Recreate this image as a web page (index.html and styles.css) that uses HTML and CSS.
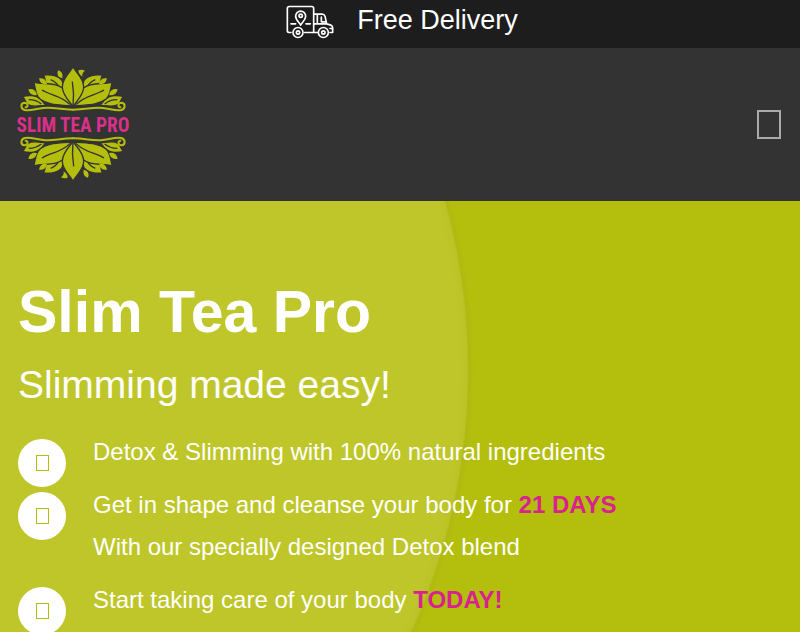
FILE: index.html
```
<!DOCTYPE html>
<html lang="en">
<head>
<meta charset="utf-8">
<meta name="viewport" content="width=device-width, initial-scale=1">
<title>Slim Tea Pro</title>
<link rel="stylesheet" href="styles.css">
</head>
<body>
<div class="topbar">
  <svg class="truck" viewBox="45 15 150 105" aria-hidden="true">
    <path d="M63 99H57Q52 99 52 94V27Q52 21 58 21H125Q131 21 131 27V99H104M63 73H77M108 73H121M131 44H156Q163 44 165 50L170 73L183 77Q188 79 188 85V99H180M142 99H131M131 73H170M142 44V73M154 53V67H166M186 87H180"/>
    <path d="M92 77C87 68 77 61 77 50A15 15 0 0 1 107 50C107 61 97 68 92 77Z"/>
    <circle cx="92" cy="49" r="5"/>
    <circle cx="84" cy="99" r="15"/><circle cx="84" cy="99" r="5"/>
    <circle cx="160" cy="99" r="15"/><circle cx="160" cy="99" r="5"/>
  </svg>
  <span>Free Delivery</span>
</div>
<header class="header">
  <a class="logo" href="#" aria-label="Slim Tea Pro">
    <svg viewBox="48 36 342 342">
      <defs>
        <g id="side">
          <path class="leaf" d="M130 60C152 57 177 62 187 78C192 90 188 99 187 108C168 103 148 101 140 89C133 80 138 71 130 60Z"/>
          <path class="vein" d="M152 74Q172 82 180 103"/>
          <path class="leaf" d="M67 125C86 119 108 121 120 131C128 137 130 143 137 151C117 152 96 157 84 149C75 143 77 132 67 125Z"/>
          <path class="vein" d="M86 134Q108 134 124 147"/>
          <path class="leaf" d="M101 81C130 89 164 81 186 98C205 113 210 132 215 153C184 149 146 152 121 133C104 119 108 99 101 81Z"/>
          <path class="vein" d="M126 105C152 122 184 121 210 149"/>
          <path d="M85 103Q105 98 111 120Q90 124 85 103Z"/>
          <path d="M117 70Q137 67 141 87Q121 91 117 70Z"/>
          <path class="curl" d="M219 164C178 164 162 156 130 159C107 161 91 169 74 165C61 161 61 144 73 143C84 143 86 156 77 157"/>
        </g>
        <g id="crown">
          <use href="#side"/>
          <use href="#side" transform="translate(438 0) scale(-1 1)"/>
          <path class="leaf" d="M219 36C230 55 252 71 251 97C250 121 231 138 219 154C207 138 188 121 187 97C186 71 208 55 219 36Z"/>
          <path class="vein" d="M217 80Q223 116 219 152"/>
          <path d="M174 46Q191 50 187 70Q167 66 174 46Z"/>
          <path d="M235 46Q246 42 255 47Q245 54 247 65Q235 57 235 46Z"/>
        </g>
      </defs>
      <use href="#crown"/>
      <use href="#crown" transform="rotate(180 219 207)"/>
      <text class="brand" x="219" y="230">SLIM TEA PRO</text>
    </svg>
  </a>
  <button class="menu" type="button" aria-label="Menu"></button>
</header>
<main class="hero">
  <h1>Slim Tea Pro</h1>
  <h2>Slimming made easy!</h2>
  <ul class="benefits">
    <li><span class="badge"></span><p>Detox &amp; Slimming with 100% natural ingredients</p></li>
    <li><span class="badge"></span><p>Get in shape and cleanse your body for <strong>21 DAYS</strong><br>With our specially designed Detox blend</p></li>
    <li><span class="badge"></span><p>Start taking care of your body <strong>TODAY!</strong></p></li>
  </ul>
</main>
</body>
</html>
```
FILE: styles.css
```
* { box-sizing: border-box; }
html { height: 100%; }
body {
  margin: 0;
  height: 100%;
  overflow: hidden;
  display: flex;
  flex-direction: column;
  font-family: "Liberation Sans", Arial, sans-serif;
  color: #fff;
  background: #b4be0d;
}
.topbar {
  flex: none;
  display: flex;
  justify-content: center;
  gap: 22px;
  padding: 4px 0 8px 3px;
  background: #1d1d1d;
  font-size: 27px;
  line-height: 32px;
}
.topbar span { height: 36px; }
.truck {
  width: 50px;
  height: 36px;
  fill: none;
  stroke: #fff;
  stroke-width: 5;
  stroke-linecap: round;
  stroke-linejoin: round;
}
.header {
  flex: none;
  display: flex;
  align-items: center;
  justify-content: space-between;
  padding: 19px 19px 20px 16px;
  background: #333;
}
.logo { display: block; }
.logo svg {
  display: block;
  width: 114px;
  height: 114px;
  overflow: visible;
  fill: #b4be0d;
}
.leaf { stroke: #333; stroke-width: 4; }
.vein { fill: none; stroke: #333; stroke-width: 4; }
.curl { fill: none; stroke: #b4be0d; stroke-width: 6; stroke-linecap: round; }
.brand {
  fill: #d9308a;
  font: bold 58px "Roboto Condensed", "Open Sans Condensed", Roboto, sans-serif;
  text-anchor: middle;
}
.menu {
  width: 24px;
  height: 29px;
  padding: 0;
  border: 2px solid #aaa;
  background: none;
}
.hero {
  flex: 1 0 auto;
  padding: 78px 18px 0;
  background: radial-gradient(circle at -163px 169px, #bec629 0 622px, #bbc327 630px, #b0b910 632px, #b4be0d 637px);
}
h1 { margin: 0; font-size: 59px; line-height: 66px; }
h2 { margin: 16px 0 31px; font-size: 39px; line-height: 47px; font-weight: normal; }
.benefits {
  display: grid;
  gap: 5px;
  margin: 0;
  padding: 0;
  list-style: none;
  font-size: 24px;
  line-height: 42px;
}
.benefits li { display: flex; align-items: flex-start; gap: 27px; }
.benefits p { margin: -8px 0 14px; }
.benefits strong { color: #d9218f; }
.badge {
  flex: none;
  display: grid;
  place-items: center;
  width: 48px;
  height: 48px;
  border-radius: 50%;
  background: #fff;
}
.badge::before {
  content: "";
  box-sizing: border-box;
  width: 13px;
  height: 16px;
  border: 1px solid #b4be0d;
}
```
